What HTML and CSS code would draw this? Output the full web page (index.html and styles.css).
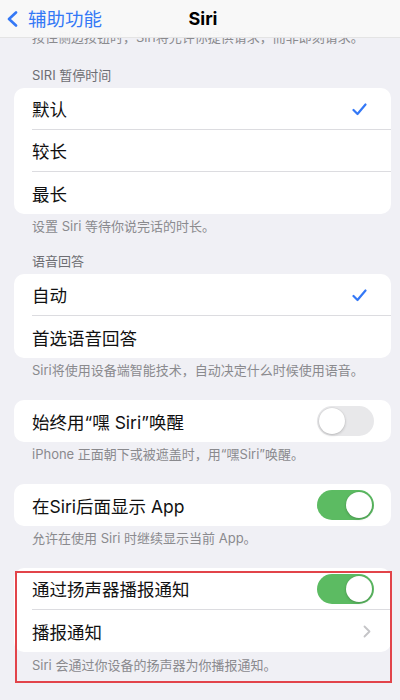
FILE: index.html
```html
<!DOCTYPE html>
<html lang="zh-CN">
<head>
<meta charset="utf-8">
<title>Siri</title>
<link rel="stylesheet" href="styles.css">
</head>
<body>
<div class="screen">
  <header class="nav">
    <div class="nav-back">
      <svg class="back-chevron" width="12" height="16" viewBox="0 0 12 16"><path d="M10 1.5 L3 8 L10 14.5" fill="none" stroke="#3478f6" stroke-width="2.6" stroke-linecap="round" stroke-linejoin="round"/></svg>
      <span>辅助功能</span>
    </div>
    <div class="nav-title">Siri</div>
    <div></div>
  </header>

  <main class="content">
    <p class="footer first">按住侧边按钮时，Siri将允许你提供请求，而非即刻请求。</p>

    <p class="header">SIRI 暂停时间</p>
    <div class="card">
      <div class="row"><div class="row-inner"><span>默认</span>
        <svg class="check" width="15" height="13" viewBox="0 0 15 13"><path d="M1.5 7 L5.5 11 L13.5 1.5" fill="none" stroke="#3478f6" stroke-width="2.2" stroke-linecap="round" stroke-linejoin="round"/></svg>
      </div></div>
      <div class="row"><div class="row-inner"><span>较长</span></div></div>
      <div class="row"><div class="row-inner"><span>最长</span></div></div>
    </div>
    <p class="footer">设置 Siri 等待你说完话的时长。</p>

    <p class="header">语音回答</p>
    <div class="card">
      <div class="row"><div class="row-inner"><span>自动</span>
        <svg class="check" width="15" height="13" viewBox="0 0 15 13"><path d="M1.5 7 L5.5 11 L13.5 1.5" fill="none" stroke="#3478f6" stroke-width="2.2" stroke-linecap="round" stroke-linejoin="round"/></svg>
      </div></div>
      <div class="row"><div class="row-inner"><span>首选语音回答</span></div></div>
    </div>
    <p class="footer">Siri将使用设备端智能技术，自动决定什么时候使用语音。</p>

    <div class="card gap">
      <div class="row"><div class="row-inner toggle-row"><span>始终用“嘿 Siri”唤醒</span>
        <span class="toggle"><span class="knob"></span></span>
      </div></div>
    </div>
    <p class="footer">iPhone 正面朝下或被遮盖时，用“嘿Siri”唤醒。</p>

    <div class="card gap">
      <div class="row"><div class="row-inner toggle-row"><span>在Siri后面显示 App</span>
        <span class="toggle on"><span class="knob"></span></span>
      </div></div>
    </div>
    <p class="footer">允许在使用 Siri 时继续显示当前 App。</p>

    <section class="highlighted gap">
      <div class="card">
        <div class="row"><div class="row-inner toggle-row"><span>通过扬声器播报通知</span>
          <span class="toggle on"><span class="knob"></span></span>
        </div></div>
        <div class="row"><div class="row-inner chevron-row"><span>播报通知</span>
          <svg class="chevron" width="8" height="13" viewBox="0 0 8 13"><path d="M1.5 1.5 L6.5 6.5 L1.5 11.5" fill="none" stroke="#c4c4c7" stroke-width="1.8" stroke-linecap="round" stroke-linejoin="round"/></svg>
        </div></div>
      </div>
      <p class="footer">Siri 会通过你设备的扬声器为你播报通知。</p>
      <div class="red-frame"></div>
    </section>
  </main>
</div>
</body>
</html>
```

FILE: styles.css
```css
* { box-sizing: border-box; }
html, body {
  margin: 0;
  padding: 0;
  background: #f0f0f5;
}
body {
  font-family: "Inter", "Noto Sans CJK SC", "Noto Sans", sans-serif;
  color: #111;
  width: 400px;
  height: 700px;
  overflow: hidden;
}
.screen {
  position: relative;
  width: 400px;
  height: 700px;
  overflow: hidden;
}
.nav {
  position: absolute;
  top: 0;
  left: 0;
  right: 0;
  height: 38px;
  z-index: 5;
  background: rgba(248, 248, 248, 0.98);
  border-bottom: 0.5px solid rgba(0, 0, 0, 0.08);
  display: grid;
  grid-template-columns: 1fr auto 1fr;
  align-items: center;
  padding-left: 6px;
}
.nav-back {
  display: flex;
  align-items: center;
  gap: 10px;
  color: #3478f6;
  font-size: 18.5px;
  line-height: 24px;
}
.back-chevron { display: block; margin-top: 1px; }
.nav-title {
  font-size: 18px;
  font-weight: 700;
  color: #000;
  line-height: 24px;
}
.content {
  padding-top: 28px;
}
.header, .footer {
  margin: 0;
  padding: 0 32px;
  font-size: 13px;
  line-height: 18px;
  white-space: nowrap;
}
.header {
  color: #6d6d72;
  margin-top: 17px;
  margin-bottom: 4px;
}
.footer {
  color: #8a8a8e;
  margin-top: 3px;
}
.footer.first { margin-top: 0; }
.footer.first + .header { margin-top: 20px; }
.card {
  background: #fff;
  border-radius: 10px;
  margin: 0 9px 0 14px;
  overflow: hidden;
}
.gap { margin-top: 21px; }
.row {
  padding-left: 18px;
}
.row-inner {
  height: 42px;
  display: flex;
  align-items: center;
  justify-content: space-between;
  border-bottom: 0.7px solid #dcdce0;
  padding-right: 24px;
  font-size: 17.5px;
  color: #111;
}
.row:last-child .row-inner { border-bottom: none; }
.toggle-row { padding-right: 17px; }
.chevron-row { padding-right: 20px; }
.check { display: block; margin-top: 1px; }
.chevron { display: block; }
.toggle {
  width: 57px;
  height: 30px;
  border-radius: 15px;
  background: #e8e8ea;
  display: flex;
  align-items: center;
  padding: 2px;
}
.toggle .knob {
  width: 26px;
  height: 26px;
  border-radius: 50%;
  background: #fff;
  box-shadow: 0 1px 3px rgba(0, 0, 0, 0.2), 0 0 0 0.5px rgba(0, 0, 0, 0.05);
}
.toggle.on {
  background: #5cbb62;
  justify-content: flex-end;
}
.highlighted {
  position: relative;
  padding-bottom: 9px;
}
.highlighted .footer { margin-top: 4px; }
.red-frame {
  position: absolute;
  top: 3px;
  left: 15px;
  right: 8px;
  bottom: 0;
  border: 2px solid #e2444a;
  pointer-events: none;
}
```
